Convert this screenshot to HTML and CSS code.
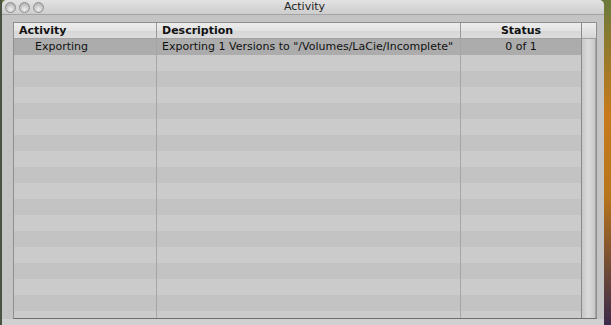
FILE: index.html
```html
<!DOCTYPE html>
<html lang="en">
<head>
    <meta charset="UTF-8">
    <title>Activity</title>
    <link rel="stylesheet" href="styles.css">
</head>
<body>
    <div class="window">
        <!-- Titelleiste -->
        <div class="titlebar">
            <div class="lights">
                <span class="light"></span>
                <span class="light"></span>
                <span class="light"></span>
            </div>
            <div class="title">Activity</div>
        </div>

        <div class="content">
            <div class="table">
                <div class="list">
                    <div class="row header">
                        <div class="cell">Activity</div>
                        <div class="cell">Description</div>
                        <div class="cell center">Status</div>
                    </div>
                    <div class="row selected">
                        <div class="cell indent">Exporting</div>
                        <div class="cell">Exporting 1 Versions to "/Volumes/LaCie/Incomplete"</div>
                        <div class="cell center">0 of 1</div>
                    </div>
                    <div class="row"><div class="cell"></div><div class="cell"></div><div class="cell"></div></div>
                    <div class="row"><div class="cell"></div><div class="cell"></div><div class="cell"></div></div>
                    <div class="row"><div class="cell"></div><div class="cell"></div><div class="cell"></div></div>
                    <div class="row"><div class="cell"></div><div class="cell"></div><div class="cell"></div></div>
                    <div class="row"><div class="cell"></div><div class="cell"></div><div class="cell"></div></div>
                    <div class="row"><div class="cell"></div><div class="cell"></div><div class="cell"></div></div>
                    <div class="row"><div class="cell"></div><div class="cell"></div><div class="cell"></div></div>
                    <div class="row"><div class="cell"></div><div class="cell"></div><div class="cell"></div></div>
                    <div class="row"><div class="cell"></div><div class="cell"></div><div class="cell"></div></div>
                    <div class="row"><div class="cell"></div><div class="cell"></div><div class="cell"></div></div>
                    <div class="row"><div class="cell"></div><div class="cell"></div><div class="cell"></div></div>
                    <div class="row"><div class="cell"></div><div class="cell"></div><div class="cell"></div></div>
                    <div class="row"><div class="cell"></div><div class="cell"></div><div class="cell"></div></div>
                    <div class="row"><div class="cell"></div><div class="cell"></div><div class="cell"></div></div>
                    <div class="row"><div class="cell"></div><div class="cell"></div><div class="cell"></div></div>
                    <div class="row"><div class="cell"></div><div class="cell"></div><div class="cell"></div></div>
                    <div class="row"><div class="cell"></div><div class="cell"></div><div class="cell"></div></div>
                    <div class="row"><div class="cell"></div><div class="cell"></div><div class="cell"></div></div>
                </div>
                <!-- Scrollbalken -->
                <div class="scroller">
                    <div class="corner"></div>
                    <div class="track"></div>
                </div>
            </div>
        </div>
    </div>
</body>
</html>
```

FILE: styles.css
```css
body {
    margin: 0;
    width: 611px;
    height: 325px;
    overflow: hidden;
    font-family: "DejaVu Sans", sans-serif;
    font-size: 11px;
    color: #111;
    display: flex;
    background: linear-gradient(to right, #4a5340 0, #4a5340 2px, transparent 2px),
                linear-gradient(to bottom, #6b7a3a 0, #c77a1c 35%, #b8761c 60%, #3b2a4a 100%);
}

.window {
    margin-left: 2px;
    width: 602px;
    height: 325px;
    display: flex;
    flex-direction: column;
    background-color: #c4c4c4;
    border-radius: 5px 5px 0 0;
    overflow: hidden;
}

.titlebar {
    height: 14px;
    flex: none;
    display: flex;
    align-items: center;
    background: linear-gradient(to bottom, #e2e2e2, #cdcdcd);
    border-bottom: 1px solid #a3a3a3;
}

.lights {
    display: flex;
    gap: 3px;
    padding-left: 3px;
    width: 70px;
}

.light {
    width: 9px;
    height: 9px;
    border-radius: 50%;
    border: 1px solid #8e8e8e;
    background: radial-gradient(circle at 50% 70%, #f0f0f0, #b9b9b9 70%);
}

.title {
    flex: 1;
    text-align: center;
    margin-right: 70px;
    line-height: 14px;
    color: #222;
}

.content {
    flex: 1;
    min-height: 0;
    padding: 7px 7px 6px 11px;
    display: flex;
    background: linear-gradient(to bottom, #c4c4c4 0, #c4c4c4 calc(100% - 6px), #d0d0d0 calc(100% - 6px));
}

.table {
    flex: 1;
    min-height: 0;
    display: flex;
    border: 1px solid #8f8f8f;
    border-bottom-color: #6f6f6f;
    background-color: #cbcbcb;
    overflow: hidden;
}

.list {
    width: 567px;
    display: flex;
    flex-direction: column;
    overflow: hidden;
}

.row {
    display: grid;
    grid-template-columns: 143px 304px 120px;
    height: 16px;
    flex: none;
}

.row:nth-child(odd) {
    background-color: #cbcbcb;
}

.row:nth-child(even) {
    background-color: #c3c3c3;
}

.cell {
    border-right: 1px solid #a6a6a6;
    padding-left: 5px;
    line-height: 16px;
    white-space: nowrap;
    overflow: hidden;
}

.cell:last-child {
    border-right: none;
}

.row.header {
    height: 15px;
    border-bottom: 1px solid #a0a0a0;
    background: linear-gradient(to bottom, #ededed 0, #e3e3e3 50%, #d6d6d6 51%, #dcdcdc 100%);
    font-weight: bold;
}

.row.header .cell {
    line-height: 15px;
    border-right-color: #9a9a9a;
}

.row.selected {
    background-color: #acacac;
}

.indent {
    padding-left: 21px;
}

.center {
    text-align: center;
    padding-left: 0;
}

.scroller {
    flex: 1;
    display: flex;
    flex-direction: column;
    border-left: 1px solid #8a8a8a;
}

.corner {
    height: 15px;
    flex: none;
    border-bottom: 1px solid #a0a0a0;
    background: linear-gradient(to bottom, #ededed, #d6d6d6);
}

.track {
    flex: 1;
    border-right: 1px solid #a2a2a2;
    background: linear-gradient(to right, #c8c8c8, #dadada 50%, #c8c8c8);
}
```
